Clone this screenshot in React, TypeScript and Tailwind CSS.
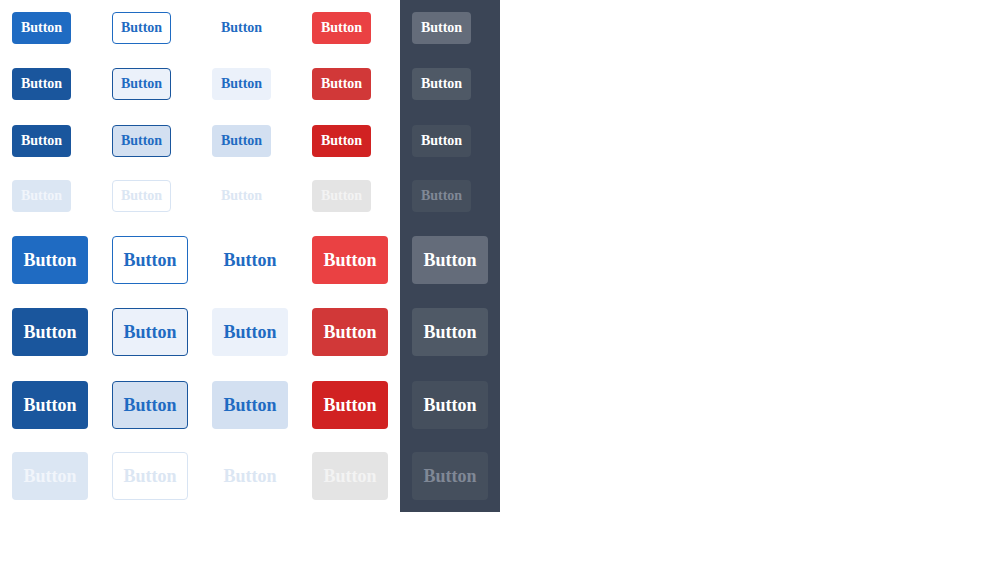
type Variant = "primary" | "outline" | "ghost" | "danger" | "light";
type State = "idle" | "hover" | "active" | "disabled";

const styles: Record<Variant, Record<State, string>> = {
  primary: {
    idle: "bg-[#1f6bc2] text-white",
    hover: "bg-[#1a569d] text-white",
    active: "bg-[#1a569d] text-white",
    disabled: "bg-[#dbe6f3] text-[#f1f5fb]",
  },
  outline: {
    idle: "bg-white border border-[#1f6bc2] text-[#1f6bc2]",
    hover: "bg-[#ebf1fa] border border-[#1a569d] text-[#1f6bc2]",
    active: "bg-[#d3e0f1] border border-[#1a569d] text-[#1f6bc2]",
    disabled: "bg-white border border-[#d8e4f3] text-[#dbe6f3]",
  },
  ghost: {
    idle: "text-[#1f6bc2]",
    hover: "bg-[#ebf1fa] text-[#1f6bc2]",
    active: "bg-[#d3e0f1] text-[#1f6bc2]",
    disabled: "text-[#dbe6f3]",
  },
  danger: {
    idle: "bg-[#ea4143] text-white",
    hover: "bg-[#d13838] text-white",
    active: "bg-[#d12222] text-white",
    disabled: "bg-[#e4e4e4] text-[#f3f3f3]",
  },
  light: {
    idle: "bg-[#646c7a] text-white",
    hover: "bg-[#4f5966] text-white",
    active: "bg-[#454f5d] text-white",
    disabled: "bg-[#454f5d] text-[#808896]",
  },
};

const variants: Variant[] = ["primary", "outline", "ghost", "danger", "light"];
const states: State[] = ["idle", "hover", "active", "disabled"];

function Btn({ variant, state, big }: { variant: Variant; state: State; big?: boolean }) {
  return (
    <button
      type="button"
      className={[
        "flex items-center justify-center rounded-[4px] font-bold leading-none",
        big ? "h-12 w-[76px] text-[18px]" : "h-8 w-[59px] text-[14px]",
        state === "active" ? "translate-y-px" : "",
        styles[variant][state],
      ].join(" ")}
      style={{ fontFamily: '"Liberation Serif", "Times New Roman", serif' }}
    >
      Button
    </button>
  );
}

export default function App() {
  return (
    <div className="flex bg-white" style={{ width: 1000, height: 581 }}>
      {variants.map((v) => (
        <div key={v} className={["flex w-[100px] flex-col self-start", v === "light" ? "bg-[#3b4556]" : ""].join(" ")}>
          {states.map((s) => (
            <div key={s} className="p-3">
              <Btn variant={v} state={s} />
            </div>
          ))}
          {states.map((s) => (
            <div key={s} className="p-3">
              <Btn variant={v} state={s} big />
            </div>
          ))}
        </div>
      ))}
    </div>
  );
}
